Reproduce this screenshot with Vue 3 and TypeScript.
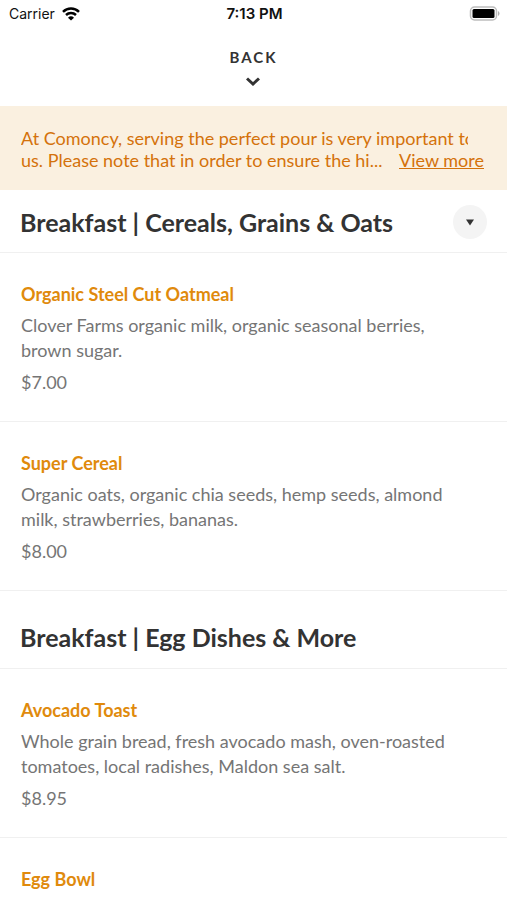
<script setup lang="ts">
interface Dish {
  name: string
  description: string
  price: string
}

interface Section {
  title: string
  dishes: Dish[]
}

const sections: Section[] = [
  {
    title: 'Breakfast | Cereals, Grains & Oats',
    dishes: [
      { name: 'Organic Steel Cut Oatmeal', description: 'Clover Farms organic milk, organic seasonal berries, brown sugar.', price: '$7.00' },
      { name: 'Super Cereal', description: 'Organic oats, organic chia seeds, hemp seeds, almond milk, strawberries, bananas.', price: '$8.00' },
    ],
  },
  {
    title: 'Breakfast | Egg Dishes & More',
    dishes: [
      { name: 'Avocado Toast', description: 'Whole grain bread, fresh avocado mash, oven-roasted tomatoes, local radishes, Maldon sea salt.', price: '$8.95' },
      { name: 'Egg Bowl', description: '', price: '' },
    ],
  },
]
</script>

<template>
  <div class="screen">
    <div class="status">
      <div class="carrier">
        <span>Carrier</span>
        <svg width="18" height="14" viewBox="0 0 18 14" aria-hidden="true">
          <path d="M1 4.800a11.500 11.500 0 0 1 16 0M4 8a7.300 7.300 0 0 1 10 0" fill="none" stroke="#000" stroke-width="2.500" />
          <path d="M9 13.600 6 10.700a4.300 4.300 0 0 1 6 0z" fill="#000" />
        </svg>
      </div>
      <span class="time">7:13 PM</span>
      <svg class="battery" width="31" height="15" viewBox="0 0 31 15" aria-hidden="true">
        <rect x="1.500" y="1" width="26" height="13" rx="4" fill="none" stroke="#bdbdbd" stroke-width="1.500" />
        <rect x="3.500" y="3" width="22" height="9" rx="1.500" fill="#000" />
        <path d="M29 5v5q1.500-.6 1.500-2.500T29 5z" fill="#b0b0b0" />
      </svg>
    </div>

    <header class="header">
      <button class="back" type="button">
        <span>BACK</span>
        <svg width="14" height="9" viewBox="0 0 14 9" aria-hidden="true">
          <path d="m1 1.500 6 5.500 6-5.500" fill="none" stroke="#333" stroke-width="3" />
        </svg>
      </button>
    </header>

    <aside class="notice">
      <p class="notice-line">At Comoncy, serving the perfect pour is very important to</p>
      <p class="notice-row">
        <span>us. Please note that in order to ensure the hi...</span>
        <a href="#">View more</a>
      </p>
    </aside>

    <main>
      <section v-for="(section, index) in sections" :key="section.title">
        <div class="section-head" :class="{ first: index === 0 }">
          <h2>{{ section.title }}</h2>
          <button v-if="index === 0" class="toggle" type="button" aria-label="Choose section">
            <svg width="8" height="7" viewBox="0 0 8 7" aria-hidden="true"><path d="M0 .5h8L4 6.500z" fill="#333" /></svg>
          </button>
        </div>
        <article v-for="dish in section.dishes" :key="dish.name" class="dish">
          <h3>{{ dish.name }}</h3>
          <p v-if="dish.description" class="description">{{ dish.description }}</p>
          <p v-if="dish.price" class="price">{{ dish.price }}</p>
        </article>
      </section>
    </main>
  </div>
</template>

<style>
body {
  margin: 0;
  background: #fff;
}
</style>

<style scoped>
.screen {
  height: 100vh;
  overflow: hidden;
  font-family: Lato, sans-serif;
  color: #333;
}
h2, h3, p {
  margin: 0;
}
button {
  border: 0;
  padding: 0;
  color: inherit;
  font-family: inherit;
  cursor: pointer;
}
.status {
  display: grid;
  grid-template-columns: 1fr auto 1fr;
  align-items: center;
  height: 27px;
  padding: 0 7px 0 9px;
  color: #111;
  font-family: Inter, sans-serif;
  font-size: 14px;
}
.carrier {
  display: flex;
  align-items: center;
  gap: 7px;
}
.time {
  font-size: 15px;
  font-weight: 600;
}
.battery {
  justify-self: end;
}
.header {
  display: flex;
  justify-content: center;
  height: 79px;
}
.back {
  display: flex;
  flex-direction: column;
  align-items: center;
  gap: 10px;
  padding-top: 20px;
  background: none;
  font-size: 15px;
  line-height: 20px;
  font-weight: 700;
  letter-spacing: 2px;
}
.notice {
  padding: 21px 23px 19px 21px;
  background: #faf0e0;
  color: #d4720b;
  font-size: 18px;
  line-height: 22px;
}
.notice-line {
  margin-right: 16px;
  overflow: hidden;
  white-space: nowrap;
}
.notice-row {
  display: flex;
  justify-content: space-between;
  white-space: nowrap;
}
.notice a {
  color: inherit;
}
.section-head {
  display: flex;
  align-items: center;
  justify-content: space-between;
  box-sizing: border-box;
  height: 78px;
  padding: 14px 20px 0;
  border-bottom: 1px solid #f0f0f0;
}
.section-head.first {
  height: 63px;
  padding-top: 2px;
}
h2 {
  font-size: 25px;
  line-height: 32px;
  font-weight: 700;
}
.toggle {
  display: grid;
  place-items: center;
  width: 34px;
  height: 34px;
  border-radius: 50%;
  background: #f4f4f4;
}
.dish {
  padding: 29px 50px 26px 21px;
  border-bottom: 1px solid #f0f0f0;
}
h3 {
  color: #e08a0c;
  font-size: 18px;
  line-height: 24px;
  font-weight: 700;
}
.description,
.price {
  margin-top: 7px;
  color: #757575;
  font-size: 18px;
  line-height: 25px;
}
</style>
